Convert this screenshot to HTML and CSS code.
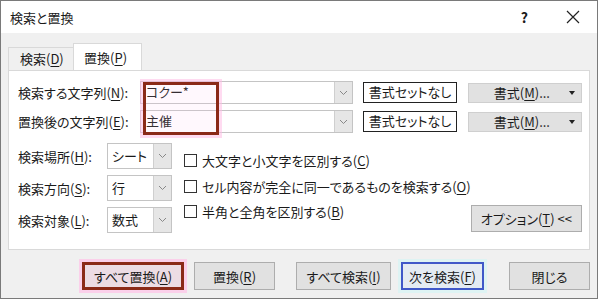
FILE: index.html
```html
<!doctype html>
<html>
<head>
	<title>検索と置換</title>
	<meta charset="utf-8">
	<link rel="stylesheet" href="styles.css">
</head>
<body>
	<div class="dialog">
		<div class="titlebar">
			<span class="title">検索と置換</span>
			<span class="help">?</span>
			<span class="close">
				<svg width="14" height="14" viewBox="0 0 14 14"><path d="M1 1L13 13M13 1L1 13" stroke="#222" stroke-width="1.2" fill="none"/></svg>
			</span>
		</div>
		<div class="content">
			<div class="tabs">
				<div class="tab">検索(<u>D</u>)</div>
				<div class="tab active">置換(<u>P</u>)</div>
			</div>
			<div class="panel">
				<div class="field-row">
					<label>検索する文字列(<u>N</u>):</label>
					<div class="combo">
						<span class="combo-text">コクー*</span>
						<span class="combo-arrow"><svg width="9" height="6" viewBox="0 0 9 6"><path d="M1 1L4.5 4.5L8 1" stroke="#888" fill="none"/></svg></span>
					</div>
					<div class="nofmt">書式セットなし</div>
					<div class="fmt-btn"><span>書式(<u>M</u>)...</span><span class="caret"></span></div>
				</div>
				<div class="field-row">
					<label>置換後の文字列(<u>E</u>):</label>
					<div class="combo">
						<span class="combo-text">主催</span>
						<span class="combo-arrow"><svg width="9" height="6" viewBox="0 0 9 6"><path d="M1 1L4.5 4.5L8 1" stroke="#888" fill="none"/></svg></span>
					</div>
					<div class="nofmt">書式セットなし</div>
					<div class="fmt-btn"><span>書式(<u>M</u>)...</span><span class="caret"></span></div>
				</div>

				<div class="options">
					<div class="selects">
						<div class="select-row">
							<label>検索場所(<u>H</u>):</label>
							<div class="select"><span class="select-text">シート</span><span class="select-arrow"><svg width="9" height="6" viewBox="0 0 9 6"><path d="M1 1L4.5 4.5L8 1" stroke="#888" fill="none"/></svg></span></div>
						</div>
						<div class="select-row">
							<label>検索方向(<u>S</u>):</label>
							<div class="select"><span class="select-text">行</span><span class="select-arrow"><svg width="9" height="6" viewBox="0 0 9 6"><path d="M1 1L4.5 4.5L8 1" stroke="#888" fill="none"/></svg></span></div>
						</div>
						<div class="select-row">
							<label>検索対象(<u>L</u>):</label>
							<div class="select"><span class="select-text">数式</span><span class="select-arrow"><svg width="9" height="6" viewBox="0 0 9 6"><path d="M1 1L4.5 4.5L8 1" stroke="#888" fill="none"/></svg></span></div>
						</div>
					</div>
					<div class="checks">
						<div class="check"><span class="box"></span>大文字と小文字を区別する(<u>C</u>)</div>
						<div class="check"><span class="box"></span>セル内容が完全に同一であるものを検索する(<u>O</u>)</div>
						<div class="check"><span class="box"></span>半角と全角を区別する(<u>B</u>)</div>
					</div>
					<div class="btn opt-btn">オプション(<u>T</u>) &lt;&lt;</div>
				</div>

				<!-- 赤枠 (入力欄の強調) -->
				<div class="highlight"></div>
			</div>

			<div class="footer">
				<div class="btn btn-all marked">すべて置換(<u>A</u>)</div>
				<div class="btn btn-replace">置換(<u>R</u>)</div>
				<div class="btn btn-findall">すべて検索(<u>I</u>)</div>
				<div class="btn btn-next">次を検索(<u>F</u>)</div>
				<div class="btn btn-close">閉じる</div>
			</div>
		</div>
	</div>
</body>
</html>
```

FILE: styles.css
```css
	* {
		box-sizing: border-box;
	}
	body {
		margin: 0;
		background: #fff;
		font-family: "Noto Sans CJK JP", "Noto Sans", sans-serif;
		font-size: 13px;
		font-feature-settings: "palt";
		color: #1a1a1a;
		white-space: nowrap;
	}
	u {
		text-underline-offset: 2px;
	}
	.dialog {
		width: 598px;
		height: 299px;
		border: 1px solid #7a7a7a;
		display: flex;
		flex-direction: column;
		background: #f0f0f0;
	}
	.titlebar {
		height: 32px;
		background: #fff;
		display: flex;
		align-items: center;
		padding-left: 9px;
	}
	.title {
		flex: 1;
		font-size: 13px;
	}
	.help {
		font-weight: bold;
		font-size: 14px;
		margin-right: 38px;
	}
	.close {
		display: flex;
		margin-right: 17px;
	}
	.content {
		flex: 1;
		padding: 10px 7px 0 7px;
	}
	.tabs {
		display: flex;
		align-items: flex-end;
		height: 27px;
	}
	.tab {
		height: 23px;
		line-height: 22px;
		padding: 0 8px 0 11px;
		border: 1px solid #d9d9d9;
		border-bottom: none;
		border-right: none;
		width: 65px;
	}
	.tab.active {
		height: 28px;
		line-height: 28px;
		width: 69px;
		padding-left: 10px;
		background: #fff;
		border-right: 1px solid #d9d9d9;
		margin-bottom: -1px;
		position: relative;
	}
	.panel {
		position: relative;
		background: #fff;
		border: 1px solid #d9d9d9;
		height: 180px;
		padding: 10px 7px 0 9px;
	}
	.field-row {
		display: grid;
		grid-template-columns: 122px 213px 104px 125px;
		align-items: center;
		height: 23px;
		margin-bottom: 6px;
	}
	.combo {
		height: 23px;
		border: 1px solid #c4c4c4;
		display: flex;
		background: #fff;
	}
	.combo-text {
		flex: 1;
		padding-left: 5px;
		line-height: 20px;
	}
	.combo-arrow, .select-arrow {
		width: 18px;
		background: #e6e6e6;
		border-left: 1px solid #cfcfcf;
		display: flex;
		align-items: center;
		justify-content: center;
	}
	.nofmt {
		margin-left: 10px;
		height: 21px;
		border: 1.5px solid #222;
		text-align: center;
		line-height: 18px;
	}
	.fmt-btn {
		margin-left: 11px;
		height: 20px;
		background: #e1e1e1;
		border: 1px solid #cfcfcf;
		display: flex;
		align-items: center;
		justify-content: flex-end;
		padding-right: 6px;
	}
	.caret {
		width: 0;
		height: 0;
		border-left: 3px solid transparent;
		border-right: 3px solid transparent;
		border-top: 4px solid #222;
		margin-left: 19px;
	}
	.options {
		display: flex;
		align-items: flex-end;
		margin-top: 10px;
	}
	.selects {
		flex-shrink: 0;
	}
	.select-row {
		display: flex;
		align-items: center;
		height: 26px;
		margin-bottom: 6px;
	}
	.select-row:last-child {
		margin-bottom: 0;
	}
	.select-row label {
		width: 89px;
	}
	.select {
		width: 65px;
		height: 26px;
		border: 1px solid #c4c4c4;
		display: flex;
	}
	.select-text {
		flex: 1;
		padding-left: 4px;
		line-height: 24px;
	}
	.checks {
		flex-shrink: 0;
		align-self: flex-start;
		margin-left: 12px;
		padding-top: 5px;
	}
	.check {
		display: flex;
		align-items: center;
		height: 25.5px;
	}
	.box {
		width: 13px;
		height: 13px;
		border: 1px solid #333;
		background: #fff;
		margin-right: 5px;
	}
	.btn {
		height: 28px;
		background: #e1e1e1;
		border: 1px solid #adadad;
		display: flex;
		align-items: center;
		justify-content: center;
	}
	.opt-btn {
		width: 112px;
		height: 27px;
		margin-left: auto;
		margin-bottom: 1px;
	}
	.highlight {
		position: absolute;
		left: 134px;
		top: 11px;
		width: 76px;
		height: 53px;
		border: 3px solid #8b2a18;
		box-shadow: 0 0 0 3px rgba(255, 190, 230, 0.55);
		background: rgba(255, 200, 235, 0.12);
	}
	.footer {
		display: flex;
		padding-left: 74px;
		margin-top: 12px;
		gap: 10px;
	}
	.btn-all {
		width: 102px;
	}
	.btn-replace {
		width: 81px;
	}
	.btn-findall {
		width: 95px;
		margin-left: 11px;
	}
	.btn-next {
		width: 83px;
		border: 2px solid #4058c8;
		background: #e4ebf2;
		box-shadow: 0 0 0 3px #def3f3;
	}
	.btn-close {
		width: 81px;
		margin-left: 15px;
	}
	.marked {
		border: 3px solid #8b2a18;
		background: #ecdce4;
		box-shadow: 0 0 0 3px #fbd0ea;
	}
```
